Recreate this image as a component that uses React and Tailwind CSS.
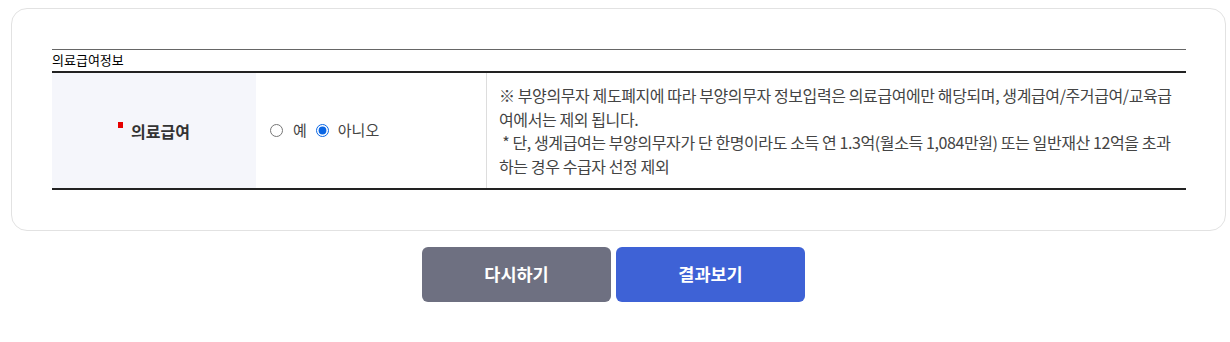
import { useState } from 'react';

const FONT = "font-['Noto_Sans_CJK_KR','Noto_Sans',sans-serif]";

export default function App() {
  const [medical, setMedical] = useState('no');

  return (
    <div className={`${FONT} w-[1230px] h-[342px] bg-white text-[#333]`}>
      {/* form card */}
      <div className="ml-[11px] mr-[4px] mt-[8px] h-[223px] border border-[#e2e2e2] rounded-[16px] pl-[40px] pr-[39px] pt-[40px]">
        <div className="border-t border-[#666]">
          <div className="text-[13px] leading-[20px] text-black h-[21px]">의료급여정보</div>
          <div className="flex border-t-2 border-b-2 border-[#222] h-[119px]">
            {/* label */}
            <div className="w-[204px] bg-[#f5f6fb] flex items-center justify-center">
              <span className="flex items-start">
                <span className="mt-[3px] mr-[8px] w-[5px] h-[6px] bg-[#e60000]" />
                <span className="text-[16px] font-bold text-[#333]">의료급여</span>
              </span>
            </div>
            {/* radios */}
            <div className="w-[230px] flex items-center pl-[14px] text-[15px] text-[#444]">
              <label className="flex items-center">
                <input
                  type="radio"
                  name="medical"
                  checked={medical === 'yes'}
                  onChange={() => setMedical('yes')}
                  className="w-[13px] h-[13px] m-0 accent-[#0a66e4]"
                />
                <span className="ml-[10px]">예</span>
              </label>
              <label className="flex items-center ml-[9px]">
                <input
                  type="radio"
                  name="medical"
                  checked={medical === 'no'}
                  onChange={() => setMedical('no')}
                  className="w-[13px] h-[13px] m-0 accent-[#0a66e4]"
                />
                <span className="ml-[9px]">아니오</span>
              </label>
            </div>
            {/* notice */}
            <div className="flex-1 border-l border-[#ddd] pl-[12px] pr-[8px] pt-[11px] text-[16px] tracking-[-0.4px] leading-[23.7px] text-[#444] break-all">
              ※ 부양의무자 제도폐지에 따라 부양의무자 정보입력은 의료급여에만 해당되며, 생계급여/주거급여/교육급여에서는 제외 됩니다.
              <br />
              &nbsp;* 단, 생계급여는 부양의무자가 단 한명이라도 소득 연 1.3억(월소득 1,084만원) 또는 일반재산 12억을 초과하는 경우 수급자 선정 제외
            </div>
          </div>
        </div>
      </div>

      {/* actions */}
      <div className="flex justify-center gap-[5px] mt-[16px] pr-[3px]">
        <button className="w-[189px] h-[55px] rounded-[6px] bg-[#6e7081] text-white text-[17.5px] font-bold">
          다시하기
        </button>
        <button className="w-[189px] h-[55px] rounded-[6px] bg-[#3e62d6] text-white text-[17.5px] font-bold">
          결과보기
        </button>
      </div>
    </div>
  );
}
